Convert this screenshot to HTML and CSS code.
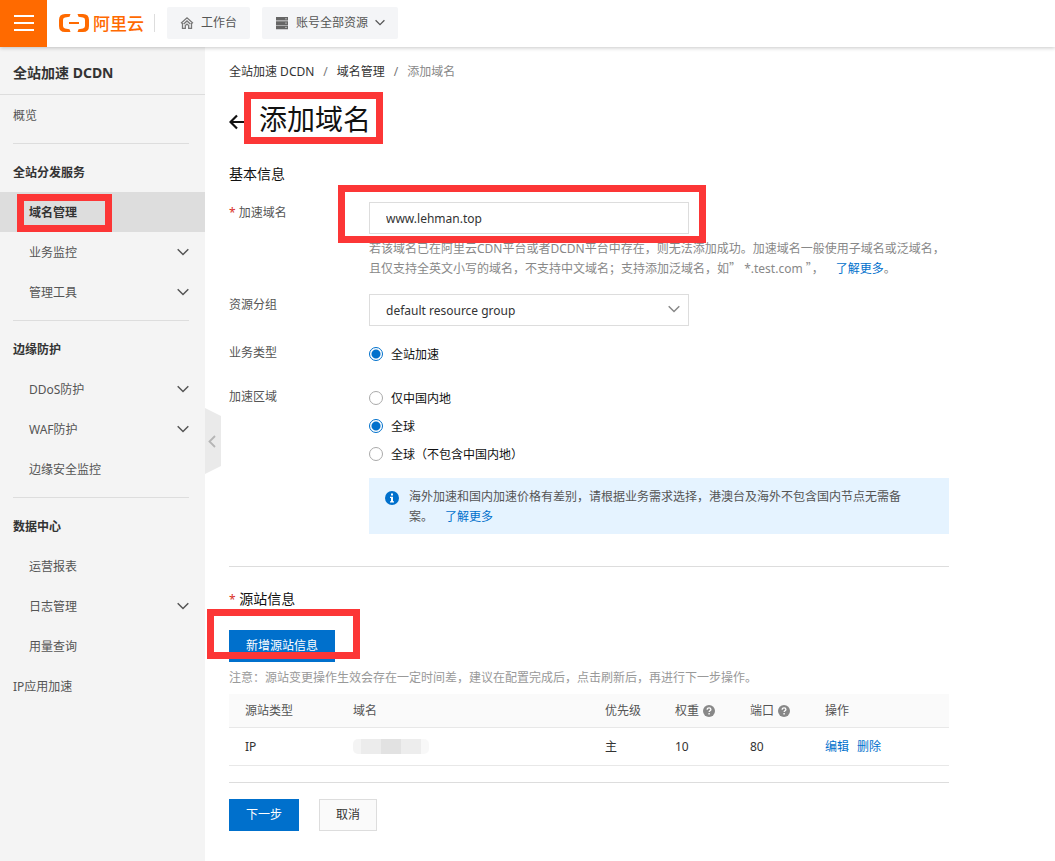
FILE: index.html
```html
<!DOCTYPE html>
<html lang="zh-CN">
<head>
<meta charset="utf-8">
<meta name="viewport" content="width=device-width, initial-scale=1">
<title>添加域名</title>
<link rel="stylesheet" href="styles.css">
</head>
<body>
<svg width="0" height="0" class="defs" aria-hidden="true">
  <symbol id="chevron" viewBox="0 0 12 8"><path d="M.7 1.3 6 6.500l5.300-5.200" fill="none" stroke="currentColor" stroke-width="1.500"/></symbol>
  <symbol id="help" viewBox="0 0 12 12"><circle cx="6" cy="6" r="6" fill="#888"/><path d="M4.200 4.700c0-1.200.8-1.800 1.900-1.800s1.800.6 1.800 1.600c0 1.300-1.800 1.300-1.800 2.600" fill="none" stroke="#fff" stroke-width="1.300"/><path d="M5.400 8h1.400v1.400H5.400z" fill="#fff"/></symbol>
</svg>
<header class="topbar">
  <button class="menu-btn" aria-label="菜单"><svg width="20" height="17" viewBox="0 0 20 17"><path d="M0 1h20M0 8h20M0 15h20" stroke="#fff" stroke-width="2"/></svg></button>
  <a class="logo" href="#">
    <svg width="30" height="18" viewBox="0 0 30 18" aria-hidden="true">
      <path d="M11.500 0H6Q0 0 0 6v6q0 6 6 6h5.500l-1-2.700-4.500-.9q-2-.5-2-2.400V6q0-1.900 2-2.400l4.500-.9zM18.500 0H24q6 0 6 6v6q0 6-6 6h-5.500l1-2.700 4.500-.9q2-.5 2-2.400V6q0-1.900-2-2.400l-4.500-.9z" fill="#ff6a00"/>
      <path d="M10 8h10v2H10z" fill="#ff6a00"/>
    </svg>
    <span>阿里云</span>
  </a>
  <span class="sep"></span>
  <button class="top-btn">
    <svg width="14" height="14" viewBox="0 0 14 14" fill="none" stroke="#777" stroke-width="1.300"><path d="M1 7.200 7 1.800l6 5.400M2.500 7v5.300h2.800V9.500L7 8l1.700 1.500v2.800h2.800V7M3.700 8 7 5l3.300 3"/></svg>
    <span>工作台</span>
  </button>
  <button class="top-btn">
    <svg width="14" height="14" viewBox="0 0 14 14"><path d="M1 1h12v3.600H1zM1 5.300h12v3.600H1zM1 9.600h12v3.600H1z" fill="#666"/><path d="M10.500 2.800h1M10.500 7.100h1M10.500 11.400h1" stroke="#fff"/></svg>
    <span>账号全部资源</span>
    <svg class="caret" width="10" height="7"><use href="#chevron"/></svg>
  </button>
</header>
<div class="layout">
  <aside class="sidebar">
    <h2 class="side-title">全站加速 DCDN</h2>
    <nav>
      <a class="nav-top" href="#">概览</a>
      <section class="nav-group">
        <h3>全站分发服务</h3>
        <a class="nav-item active" href="#"><span class="marked mark-nav">域名管理</span></a>
        <a class="nav-item" href="#">业务监控<svg width="12" height="8"><use href="#chevron"/></svg></a>
        <a class="nav-item" href="#">管理工具<svg width="12" height="8"><use href="#chevron"/></svg></a>
      </section>
      <section class="nav-group">
        <h3>边缘防护</h3>
        <a class="nav-item" href="#">DDoS防护<svg width="12" height="8"><use href="#chevron"/></svg></a>
        <a class="nav-item" href="#">WAF防护<svg width="12" height="8"><use href="#chevron"/></svg></a>
        <a class="nav-item" href="#">边缘安全监控</a>
      </section>
      <section class="nav-group">
        <h3>数据中心</h3>
        <a class="nav-item" href="#">运营报表</a>
        <a class="nav-item" href="#">日志管理<svg width="12" height="8"><use href="#chevron"/></svg></a>
        <a class="nav-item" href="#">用量查询</a>
      </section>
      <a class="nav-top" href="#">IP应用加速</a>
    </nav>
    <button class="collapse" aria-label="收起"><svg width="8" height="13" viewBox="0 0 8 13"><path d="M7 1 1.500 6.500 7 12" fill="none" stroke="#b5b5b5" stroke-width="1.800"/></svg></button>
  </aside>
  <main class="main">
    <nav class="crumbs"><a href="#">全站加速 DCDN</a><i>/</i><a href="#">域名管理</a><i>/</i><span>添加域名</span></nav>
    <div class="title-row">
      <a href="#" class="back" aria-label="返回"><svg width="16" height="16" viewBox="0 0 16 16"><path d="M1.500 8H16M8 1.500 1.500 8 8 14.500" fill="none" stroke="#111" stroke-width="2.200"/></svg></a>
      <h1 class="marked mark-title">添加域名</h1>
    </div>
    <form class="form">
      <h2 class="section-title">基本信息</h2>
      <div class="row">
        <label class="label" for="domain"><b>*</b> 加速域名</label>
        <div class="control">
          <div class="field marked mark-input"><input id="domain" class="text" type="text" value="www.lehman.top"></div>
          <p class="hint">若该域名已在阿里云CDN平台或者DCDN平台中存在，则无法添加成功。加速域名一般使用子域名或泛域名，且仅支持全英文小写的域名，不支持中文域名；支持添加泛域名，如<q>”</q> *.test.com <q>”</q>，<a class="more" href="#">了解更多</a>。</p>
        </div>
      </div>
      <div class="row">
        <label class="label" for="group">资源分组</label>
        <div class="control">
          <div class="field"><select id="group" class="text"><option>default resource group</option></select><svg class="arrow" width="12" height="8"><use href="#chevron"/></svg></div>
        </div>
      </div>
      <div class="row">
        <span class="label" id="type">业务类型</span>
        <div class="control radios" role="radiogroup" aria-labelledby="type">
          <label><input type="radio" name="type" checked><span>全站加速</span></label>
        </div>
      </div>
      <div class="row region">
        <span class="label" id="region">加速区域</span>
        <div class="control">
          <div class="radios" role="radiogroup" aria-labelledby="region">
            <label><input type="radio" name="region"><span>仅中国内地</span></label>
            <label><input type="radio" name="region" checked><span>全球</span></label>
            <label><input type="radio" name="region"><span>全球（不包含中国内地）</span></label>
          </div>
          <div class="notice">
            <svg width="14" height="14" viewBox="0 0 14 14"><circle cx="7" cy="7" r="7" fill="#0070cc"/><path d="M6 2.500h2v2H6zM5 5.700h3v4.500h1v1.300H5v-1.300h1V7H5z" fill="#fff"/></svg>
            <p>海外加速和国内加速价格有差别，请根据业务需求选择，港澳台及海外不包含国内节点无需备案。<a class="more" href="#">了解更多</a></p>
          </div>
        </div>
      </div>
      <section class="origin">
        <h2 class="section-title"><b>*</b> 源站信息</h2>
        <div class="marked mark-add"><button type="button" class="btn primary">新增源站信息</button></div>
        <p class="note">注意：源站变更操作生效会存在一定时间差，建议在配置完成后，点击刷新后，再进行下一步操作。</p>
        <table class="table">
          <colgroup><col class="c-type"><col class="c-domain"><col class="c-level"><col class="c-num"><col class="c-num"><col></colgroup>
          <thead><tr><th>源站类型</th><th>域名</th><th>优先级</th><th>权重<svg width="12" height="12"><use href="#help"/></svg></th><th>端口<svg width="12" height="12"><use href="#help"/></svg></th><th>操作</th></tr></thead>
          <tbody><tr><td>IP</td><td><span class="masked"></span></td><td>主</td><td>10</td><td>80</td><td><a href="#">编辑</a><a href="#">删除</a></td></tr></tbody>
        </table>
      </section>
      <div class="actions">
        <button type="button" class="btn primary">下一步</button>
        <button type="button" class="btn">取消</button>
      </div>
    </form>
  </main>
</div>
</body>
</html>
```
FILE: styles.css
```css
* { box-sizing: border-box; }
body {
  margin: 0;
  min-height: 100vh;
  display: flex;
  flex-direction: column;
  background: #fff;
  color: #333;
  font: 12px/20px "Noto Sans", "Noto Sans CJK SC", sans-serif;
}
button, input, select { font: inherit; color: inherit; }
a { color: #0070cc; text-decoration: none; }
h1, h2, h3, p { margin: 0; }
svg { flex: none; }
.defs { position: absolute; }

.topbar {
  display: flex;
  align-items: center;
  height: 47px;
  padding-bottom: 2px;
  background: #fff;
  box-shadow: 0 1px 4px rgba(0, 0, 0, .22);
  z-index: 2;
}
.menu-btn {
  display: flex;
  align-items: center;
  justify-content: center;
  width: 47px;
  height: 47px;
  margin-bottom: -2px;
  padding: 0;
  border: 0;
  background: #ff6a00;
}
.logo {
  display: flex;
  align-items: center;
  gap: 4px;
  margin-left: 12px;
  color: #ff6a00;
  font-size: 17px;
  font-weight: 500;
  font-family: "Noto Sans CJK SC", sans-serif;
}
.sep { width: 1px; height: 18px; margin: 0 12px 0 10px; background: #ddd; }
.top-btn {
  display: flex;
  align-items: center;
  gap: 7px;
  height: 32px;
  margin-right: 12px;
  padding: 0 13px;
  border: 0;
  border-radius: 2px;
  background: #f4f5f7;
  color: #555;
}

.layout { display: flex; flex: 1; }
.sidebar {
  position: relative;
  flex: none;
  width: 205px;
  background: #f4f4f4;
}
.side-title {
  height: 48px;
  padding: 16px 13px 0;
  border-bottom: 1px solid #ddd;
  font-size: 14px;
}
.nav-top { display: block; padding: 11px 13px 9px; color: #555; }
.nav-group::before {
  content: "";
  display: block;
  height: 1px;
  margin: 8px 16px 8px 13px;
  background: #ddd;
}
.nav-group h3 { padding: 11px 13px 9px; font-size: 12px; }
.nav-item {
  display: flex;
  align-items: center;
  justify-content: space-between;
  height: 40px;
  padding: 2px 16px 0 29px;
  color: #555;
}
.nav-item svg { margin-bottom: 2px; }
.nav-item.active { background: #ddd; color: #333; font-weight: bold; }
.collapse {
  position: absolute;
  top: 361px;
  left: 100%;
  display: flex;
  align-items: center;
  justify-content: center;
  width: 16px;
  height: 66px;
  padding: 0 2px 0 0;
  border: 0;
  background: #eaeaea;
  clip-path: polygon(0 0, 100% 8px, 100% 58px, 0 100%);
}

/* Red call-out frames drawn over the steps to follow */
.marked { position: relative; }
.marked::after {
  content: "";
  position: absolute;
  border: 7px solid #fc3636;
  pointer-events: none;
}
.mark-nav::after { inset: -9px -35px -9px -12px; }
.mark-title::after { inset: -7px -12px -5px -15px; }
.mark-input::after { inset: -17px -17px -9px -31px; }
.mark-add::after { inset: -21px -25px 3px -22px; }

.main { flex: 1; min-width: 0; padding: 15px 24px 29px; }
.crumbs a { color: #333; }
.crumbs i { margin: 0 9px; font-style: normal; color: #777; }
.crumbs span { color: #888; }
.title-row { display: flex; align-items: center; gap: 14px; margin: 17px 0 25px; }
.title-row h1 { font-size: 28px; font-weight: 400; line-height: 40px; color: #111; }
.back { display: flex; padding-top: 5px; }
.form { max-width: 720px; }
.section-title { font-size: 14px; font-weight: 400; line-height: 20px; color: #111; }
.section-title b, .label b { color: #d93026; font-size: 12px; font-weight: 400; line-height: 1; }
.row { display: flex; margin-top: 16px; }
.section-title + .row { margin-top: 18px; }
.row.region { margin-top: 20px; }
.label { flex: none; width: 140px; padding-top: 1px; color: #555; }
.control { flex: 1; min-width: 0; }
.field { position: relative; width: 320px; max-width: 100%; }
.text {
  display: block;
  width: 100%;
  height: 32px;
  padding: 0 16px;
  border: 1px solid #ddd;
  border-radius: 0;
  background: #fff;
  appearance: none;
  outline: 0;
}
select.text { padding-top: 2px; }
.arrow { position: absolute; top: 11px; right: 9px; color: #888; }
.hint { margin: 5px 0 -1px; color: #888; }
.hint q { font-family: "Noto Sans CJK SC", sans-serif; line-height: 1; quotes: none; }
.more { margin-left: 12px; }
.radios { display: grid; gap: 4px; line-height: 24px; color: #111; }
.radios label { display: flex; align-items: center; gap: 8px; height: 24px; }
.radios span { padding-top: 2px; }
.radios input {
  width: 14px;
  height: 14px;
  margin: 0;
  border: 1px solid #aaa;
  border-radius: 50%;
  background: #fff;
  appearance: none;
}
.radios input:checked {
  border-color: #0070cc;
  background: radial-gradient(circle, #0070cc 4px, #fff 5px);
}
.notice {
  display: flex;
  gap: 10px;
  margin-top: 12px;
  padding: 9px 40px 7px 16px;
  background: #e5f3ff;
  color: #555;
}
.notice svg { margin-top: 4px; }

.origin { margin-top: 32px; padding-top: 22px; border-top: 1px solid #ddd; }
.mark-add { width: fit-content; margin-top: 21px; }
.btn {
  display: block;
  height: 32px;
  padding: 0 16px;
  border: 1px solid #ddd;
  background: #fafafa;
  color: #333;
}
.btn.primary { border-color: #0070cc; background: #0070cc; color: #fff; }
.note { margin: 6px 0; color: #999; }
.table { width: 100%; border-collapse: separate; border-spacing: 0; table-layout: fixed; }
.c-type { width: 15%; }
.c-domain { width: 35%; }
.c-level { width: 70px; }
.c-num { width: 75px; }
.table th, .table td {
  height: 34px;
  padding: 0 0 0 16px;
  border-bottom: 1px solid #e8e8e8;
  text-align: left;
  font-weight: 400;
}
.table th { background: #fafafa; color: #555; }
.table td { height: 38px; }
.table th svg { margin-left: 4px; vertical-align: -2px; }
.table td a + a { margin-left: 8px; }
.masked {
  display: block;
  width: 76px;
  height: 15px;
  border-radius: 5px;
  background: linear-gradient(90deg, #f4f4f4 8px, #ececec 8px 28px, #e2e2e2 28px 48px, #ededed 48px 68px, #f8f8f8 68px);
}
.actions {
  display: flex;
  gap: 20px;
  margin-top: 16px;
  padding-top: 16px;
  border-top: 1px solid #ddd;
}
```
